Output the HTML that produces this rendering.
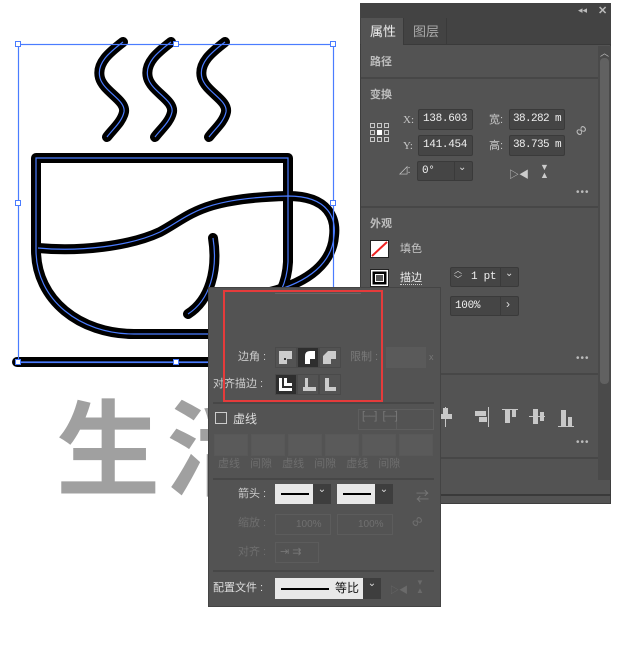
<!DOCTYPE html>
<html><head><meta charset="utf-8">
<style>
*{margin:0;padding:0;box-sizing:border-box}
body{width:636px;height:649px;background:#fff;position:relative;overflow:hidden;font-family:"Liberation Sans","Noto Sans CJK SC",sans-serif;font-size:11px;color:#d0d0d0}
.a{position:absolute}
.lbl{position:absolute;font-size:11px;color:#c8c8c8;line-height:12px}
.hd{position:absolute;font-size:11px;color:#bdbdbd;font-weight:bold;line-height:12px}
.fld{position:absolute;background:#454545;border:1px solid #3a3a3a;border-radius:2px;color:#f0f0f0;font-family:"Liberation Mono",monospace;font-size:11px;letter-spacing:-0.3px;line-height:19px;padding-left:4px;white-space:nowrap;overflow:hidden}
.div{position:absolute;height:2px;background:#474747}
.dots{position:absolute;font-size:10px;color:#bbb;letter-spacing:1px;line-height:8px}
.btn{position:absolute;width:22px;height:21px;border:1px solid #4a4a4a;background:#535353}
.dk{background:#2e2e2e}
.g{color:#6e6e6e}
.gf{position:absolute;background:#5a5a5a;border:1px solid #585858;height:22px;width:34px}
</style></head><body>
<svg class="a" style="left:0;top:0" width="360" height="380" viewBox="0 0 360 380">
<g fill="none" stroke="#000" stroke-width="10" stroke-linecap="round" stroke-linejoin="round">
<path d="M123 42 C110 52 96 63 100 78 C104 92 126 100 124 112 C122 122 112 130 107 137"/>
<path d="M171 42 C158 52 144 63 148 78 C152 92 174 100 172 112 C170 122 160 130 155 137"/>
<path d="M225 42 C212 52 198 63 202 78 C206 92 228 100 226 112 C224 122 214 130 209 137"/>
<path d="M36 158 L288 158 L288 262 C286 302 256 332 208 334 L134 334 C80 334 36 300 36 250 Z"/>
<path d="M38 248 C80 252 130 246 160 232 C190 216 200 198 288 196 C330 196 336 220 334 236 C332 262 310 282 270 292"/>
<path d="M213 238 C218 270 210 300 188 314"/>
<path d="M17 362 L210 362"/>
</g>
<g fill="none" stroke="#4a7cff" stroke-width="1.2">
<path d="M123 42 C110 52 96 63 100 78 C104 92 126 100 124 112 C122 122 112 130 107 137"/>
<path d="M171 42 C158 52 144 63 148 78 C152 92 174 100 172 112 C170 122 160 130 155 137"/>
<path d="M225 42 C212 52 198 63 202 78 C206 92 228 100 226 112 C224 122 214 130 209 137"/>
<path d="M36 158 L288 158 L288 262 C286 302 256 332 208 334 L134 334 C80 334 36 300 36 250 Z"/>
<path d="M38 248 C80 252 130 246 160 232 C190 216 200 198 288 196 C330 196 336 220 334 236 C332 262 310 282 270 292"/>
<path d="M213 238 C218 270 210 300 188 314"/>
<path d="M17 362 L210 362"/>
<rect x="18.5" y="44.5" width="315" height="318"/>
</g>
<g fill="#fff" stroke="#4a7cff" stroke-width="1">
<rect x="15.5" y="41.5" width="5" height="5"/><rect x="173.5" y="41.5" width="5" height="5"/><rect x="330.5" y="41.5" width="5" height="5"/>
<rect x="15.5" y="200.5" width="5" height="5"/><rect x="330.5" y="200.5" width="5" height="5"/>
<rect x="15.5" y="359.5" width="5" height="5"/><rect x="173.5" y="359.5" width="5" height="5"/>
</g>
</svg>
<div class="a" style="left:56px;top:384px;font-size:104px;line-height:116px;color:#a0a0a0;font-family:'Noto Sans CJK SC',sans-serif;font-weight:bold;letter-spacing:6px">生活</div>

<div class="a" style="left:360px;top:3px;width:251px;height:501px;background:#535353;border:1px solid #3e3e3e"></div>
<div class="a" style="left:360px;top:3px;width:251px;height:15px;background:#434343"></div>
<div class="a" style="left:578px;top:5px;font-size:9px;color:#bbb">◂◂</div>
<div class="a" style="left:598px;top:4px;font-size:11px;color:#bbb;font-weight:bold">✕</div>
<div class="a" style="left:360px;top:18px;width:251px;height:27px;background:#434343;border-bottom:1px solid #3a3a3a"></div>
<div class="a" style="left:361px;top:18px;width:42px;height:28px;background:#535353"></div>
<div class="a" style="left:403px;top:18px;width:1px;height:27px;background:#3a3a3a"></div>
<div class="a" style="left:446px;top:18px;width:1px;height:27px;background:#3a3a3a"></div>
<div class="lbl" style="left:370px;top:24px;font-size:13px;color:#eee;line-height:15px">属性</div>
<div class="lbl" style="left:413px;top:24px;font-size:13px;color:#aaa;line-height:15px">图层</div>
<div class="hd" style="left:370px;top:56px">路径</div>
<div class="div" style="left:361px;top:77px;width:238px"></div>
<div class="hd" style="left:370px;top:89px">变换</div>
<svg class="a" style="left:369px;top:122px" width="22" height="22"><g fill="none" stroke="#c8c8c8"><rect x="1.5" y="1.5" width="4" height="4"/><rect x="8.5" y="1.5" width="4" height="4"/><rect x="15.5" y="1.5" width="4" height="4"/><rect x="1.5" y="8.5" width="4" height="4"/><rect x="15.5" y="8.5" width="4" height="4"/><rect x="1.5" y="15.5" width="4" height="4"/><rect x="8.5" y="15.5" width="4" height="4"/><rect x="15.5" y="15.5" width="4" height="4"/></g><rect x="8" y="8" width="5" height="5" fill="#fff"/></svg>
<div class="lbl" style="left:403px;top:114px;font-family:'Liberation Serif',serif">X:</div>
<div class="fld" style="left:418px;top:109px;width:55px;height:21px">138.603</div>
<div class="lbl" style="left:403px;top:140px;font-family:'Liberation Serif',serif">Y:</div>
<div class="fld" style="left:418px;top:135px;width:55px;height:21px">141.454</div>
<div class="lbl" style="left:489px;top:114px">宽:</div>
<div class="fld" style="left:509px;top:109px;width:56px;height:21px;padding-left:3px;letter-spacing:-0.6px">38.282 m</div>
<div class="lbl" style="left:489px;top:140px">高:</div>
<div class="fld" style="left:509px;top:135px;width:56px;height:21px;padding-left:3px;letter-spacing:-0.6px">38.735 m</div>
<div class="a" style="left:576px;top:122px;font-size:16px;color:#bbb;transform:rotate(-40deg)">∞</div>
<div class="lbl" style="left:399px;top:164px">◿:</div>
<div class="fld" style="left:417px;top:161px;width:56px;height:20px">0°</div>
<div class="a" style="left:454px;top:161px;width:1px;height:20px;background:#3a3a3a"></div>
<div class="a" style="left:458px;top:162px;color:#ddd;font-size:10px">⌄</div>
<div class="a" style="left:509px;top:166px;color:#ccc;font-size:10px">▷◀</div>
<div class="a" style="left:540px;top:163px;color:#ccc;font-size:9px;line-height:8px;text-align:center">▼<br>▲</div>
<div class="dots" style="left:576px;top:189px">•••</div>
<div class="div" style="left:361px;top:206px;width:238px"></div>
<div class="hd" style="left:370px;top:218px">外观</div>
<svg class="a" style="left:370px;top:240px" width="19" height="18"><rect x="0.5" y="0.5" width="18" height="17" fill="#fff" stroke="#222"/><line x1="2" y1="16" x2="17" y2="2" stroke="#e22" stroke-width="2"/></svg>
<div class="lbl" style="left:400px;top:243px">填色</div>
<svg class="a" style="left:370px;top:269px" width="19" height="18"><rect x="0.5" y="0.5" width="18" height="17" fill="#fff" stroke="#222"/><rect x="2.5" y="2.5" width="14" height="13" fill="#000"/><rect x="5.5" y="5.5" width="8" height="7" fill="#555" stroke="#fff"/></svg>
<div class="lbl" style="left:400px;top:272px;border-bottom:1px dotted #ccc;color:#eee">描边</div>
<div class="fld" style="left:450px;top:267px;width:69px;height:20px;padding-left:20px">1 pt</div>
<div class="a" style="left:454px;top:266px;color:#ddd;font-size:8px;line-height:9px">︿<br>﹀</div>
<div class="a" style="left:500px;top:267px;width:1px;height:20px;background:#3a3a3a"></div>
<div class="a" style="left:505px;top:268px;color:#ddd;font-size:10px">⌄</div>
<div class="fld" style="left:450px;top:296px;width:69px;height:20px">100%</div>
<div class="a" style="left:500px;top:296px;width:1px;height:20px;background:#3a3a3a"></div>
<div class="a" style="left:506px;top:297px;color:#ddd;font-size:12px">›</div>
<div class="dots" style="left:576px;top:355px">•••</div>
<div class="div" style="left:361px;top:373px;width:238px"></div>
<svg class="a" style="left:440px;top:405px" width="150" height="25" fill="#c8c8c8"><rect x="3" y="3" width="5" height="6"/><rect x="0" y="9" width="12" height="5"/><rect x="5" y="2" width="1" height="20"/><rect x="35" y="6" width="11" height="5"/><rect x="39" y="12" width="8" height="5"/><rect x="48" y="2" width="1" height="20"/><rect x="62" y="4" width="16" height="1"/><rect x="65" y="4" width="5" height="14"/><rect x="72" y="4" width="4" height="8"/><rect x="89" y="11" width="16" height="1"/><rect x="93" y="4" width="5" height="15"/><rect x="100" y="7" width="4" height="9"/><rect x="118" y="21" width="16" height="1"/><rect x="121" y="5" width="5" height="16"/><rect x="128" y="12" width="4" height="9"/></svg>
<div class="dots" style="left:576px;top:439px">•••</div>
<div class="div" style="left:361px;top:457px;width:238px"></div>
<div class="a" style="left:598px;top:46px;width:13px;height:434px;background:#4a4a4a"></div>
<div class="a" style="left:600px;top:58px;width:9px;height:326px;background:#616161;border-radius:4px"></div>
<div class="a" style="left:600px;top:46px;color:#bbb;font-size:9px">︿</div>
<div class="a" style="left:360px;top:494px;width:251px;height:2px;background:#3a3a3a"></div>

<div class="a" style="left:208px;top:287px;width:233px;height:320px;background:#535353;border:1px solid #444"></div>
<div class="a" style="left:275px;top:293px;width:86px;height:1px;background:#666"></div>
<div class="lbl" style="left:238px;top:351px;color:#ccc">边角 :</div>
<div class="btn" style="left:275px;top:347px"></div><div class="btn dk" style="left:297px;top:347px"></div><div class="btn" style="left:319px;top:347px"></div>
<svg class="a" style="left:279px;top:351px" width="64" height="14"><g fill="#ccc"><path d="M0 0H13V8H8V13H0Z"/><path d="M26 13V5Q26 0 31 0H36V8H31V13Z" fill="#fff"/><path d="M44 13V5L49 0H57V8H52V13Z"/></g><rect x="5" y="7" width="2" height="2" fill="#333"/></svg>
<div class="lbl" style="left:350px;top:351px;color:#7a7a7a">限制 :</div>
<div class="a" style="left:386px;top:347px;width:40px;height:21px;background:#5a5a5a"></div>
<div class="lbl" style="left:429px;top:351px;color:#777;font-size:9px">x</div>
<div class="lbl" style="left:213px;top:378px;color:#ccc">对齐描边 :</div>
<div class="btn dk" style="left:275px;top:374px"></div><div class="btn" style="left:297px;top:374px"></div><div class="btn" style="left:319px;top:374px"></div>
<svg class="a" style="left:279px;top:378px" width="64" height="14"><g fill="#fff"><rect x="0" y="0" width="3" height="13"/><rect x="0" y="10" width="13" height="3"/><rect x="5" y="0" width="3" height="8"/><rect x="5" y="5" width="8" height="3"/></g><g fill="#ccc"><rect x="26" y="0" width="3" height="13"/><rect x="24" y="9" width="13" height="4"/><rect x="46" y="0" width="4" height="13"/><rect x="46" y="9" width="11" height="4"/></g></svg>
<div class="a" style="left:223px;top:290px;width:160px;height:112px;border:2px solid #e53b3b"></div>
<div class="a" style="left:213px;top:402px;width:221px;height:2px;background:#474747"></div>
<div class="a" style="left:215px;top:412px;width:12px;height:12px;border:1px solid #ccc"></div>
<div class="lbl" style="left:233px;top:413px;font-size:12px;color:#ddd">虚线</div>
<div class="a" style="left:358px;top:409px;width:76px;height:21px;border:1px solid #5e5e5e"></div>
<div class="a" style="left:396px;top:409px;width:1px;height:21px;background:#5e5e5e"></div>
<div class="a" style="left:362px;top:410px;color:#777;font-size:11px;letter-spacing:-1px">[‒‒]&nbsp;&nbsp;&nbsp;[‒‒]</div>
<div class="gf" style="left:214px;top:434px"></div><div class="gf" style="left:251px;top:434px"></div><div class="gf" style="left:288px;top:434px"></div><div class="gf" style="left:325px;top:434px"></div><div class="gf" style="left:362px;top:434px"></div><div class="gf" style="left:399px;top:434px"></div>
<div class="lbl g" style="left:218px;top:458px;word-spacing:7px;white-space:nowrap">虚线 间隙 虚线 间隙 虚线 间隙</div>
<div class="a" style="left:213px;top:478px;width:221px;height:2px;background:#474747"></div>
<div class="lbl" style="left:238px;top:488px;color:#ccc">箭头 :</div>
<div class="a" style="left:275px;top:484px;width:56px;height:20px;background:#e8e8e8"></div><div class="a" style="left:281px;top:493px;width:28px;height:2px;background:#000"></div><div class="a" style="left:313px;top:484px;width:18px;height:20px;background:#3e3e3e;color:#ddd;text-align:center;font-size:10px">⌄</div>
<div class="a" style="left:337px;top:484px;width:56px;height:20px;background:#e8e8e8"></div><div class="a" style="left:343px;top:493px;width:28px;height:2px;background:#000"></div><div class="a" style="left:375px;top:484px;width:18px;height:20px;background:#3e3e3e;color:#ddd;text-align:center;font-size:10px">⌄</div>
<div class="a" style="left:416px;top:486px;color:#777;font-size:13px">⇄</div>
<div class="lbl g" style="left:238px;top:517px">缩放 :</div>
<div class="a" style="left:275px;top:514px;width:56px;height:21px;border:1px solid #5c5c5c;color:#707070;padding-left:20px;line-height:19px;font-size:10px">100%</div>
<div class="a" style="left:337px;top:514px;width:56px;height:21px;border:1px solid #5c5c5c;color:#707070;padding-left:20px;line-height:19px;font-size:10px">100%</div>
<div class="a" style="left:412px;top:513px;font-size:16px;color:#6e6e6e;transform:rotate(-40deg)">∞</div>
<div class="lbl g" style="left:238px;top:546px">对齐 :</div>
<div class="a" style="left:275px;top:542px;width:44px;height:21px;border:1px solid #5c5c5c;color:#777;font-size:11px;padding-left:4px;line-height:19px">⇥ ⇉</div>
<div class="a" style="left:213px;top:570px;width:221px;height:2px;background:#474747"></div>
<div class="lbl" style="left:213px;top:582px;color:#ddd">配置文件 :</div>
<div class="a" style="left:275px;top:578px;width:106px;height:21px;background:#e8e8e8;color:#111;font-size:12px;line-height:21px;padding-left:60px">等比</div>
<div class="a" style="left:281px;top:588px;width:48px;height:2px;background:#000"></div>
<div class="a" style="left:363px;top:578px;width:18px;height:21px;background:#3e3e3e;color:#ddd;text-align:center;font-size:10px">⌄</div>
<div class="a" style="left:390px;top:583px;color:#6a6a6a;font-size:9px">▷◀</div>
<div class="a" style="left:416px;top:579px;color:#6a6a6a;font-size:8px;line-height:8px">▼<br>▲</div>
</body></html>
